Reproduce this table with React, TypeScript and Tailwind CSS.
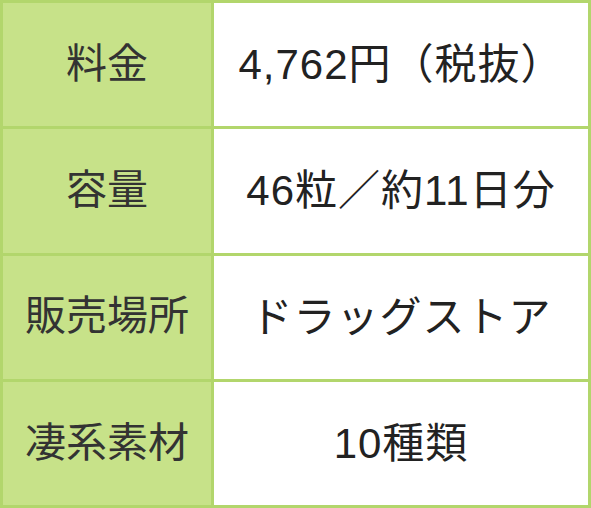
const rows = [
  { label: "料金", value: "4,762円（税抜）" },
  { label: "容量", value: "46粒／約11日分" },
  { label: "販売場所", value: "ドラッグストア" },
  { label: "凄系素材", value: "10種類" },
];

const App = () => {
  return (
    <div
      className="w-[591px] h-[508px] bg-[#b2d66c] p-[3px] grid grid-cols-[208px_1fr] grid-rows-4 gap-[3px]"
      style={{ fontFamily: '"Liberation Sans", "Noto Sans CJK JP", sans-serif' }}
    >
      {rows.map((row) => (
        <>
          <div key={row.label + "-l"} className="bg-[#c7e289] flex items-center justify-center text-[41px] text-[#333333]">
            {row.label}
          </div>
          <div key={row.label + "-r"} className="bg-white flex items-center justify-center text-[42px] tracking-[1px] text-[#222222]">
            {row.value}
          </div>
        </>
      ))}
    </div>
  );
};

export default App;
